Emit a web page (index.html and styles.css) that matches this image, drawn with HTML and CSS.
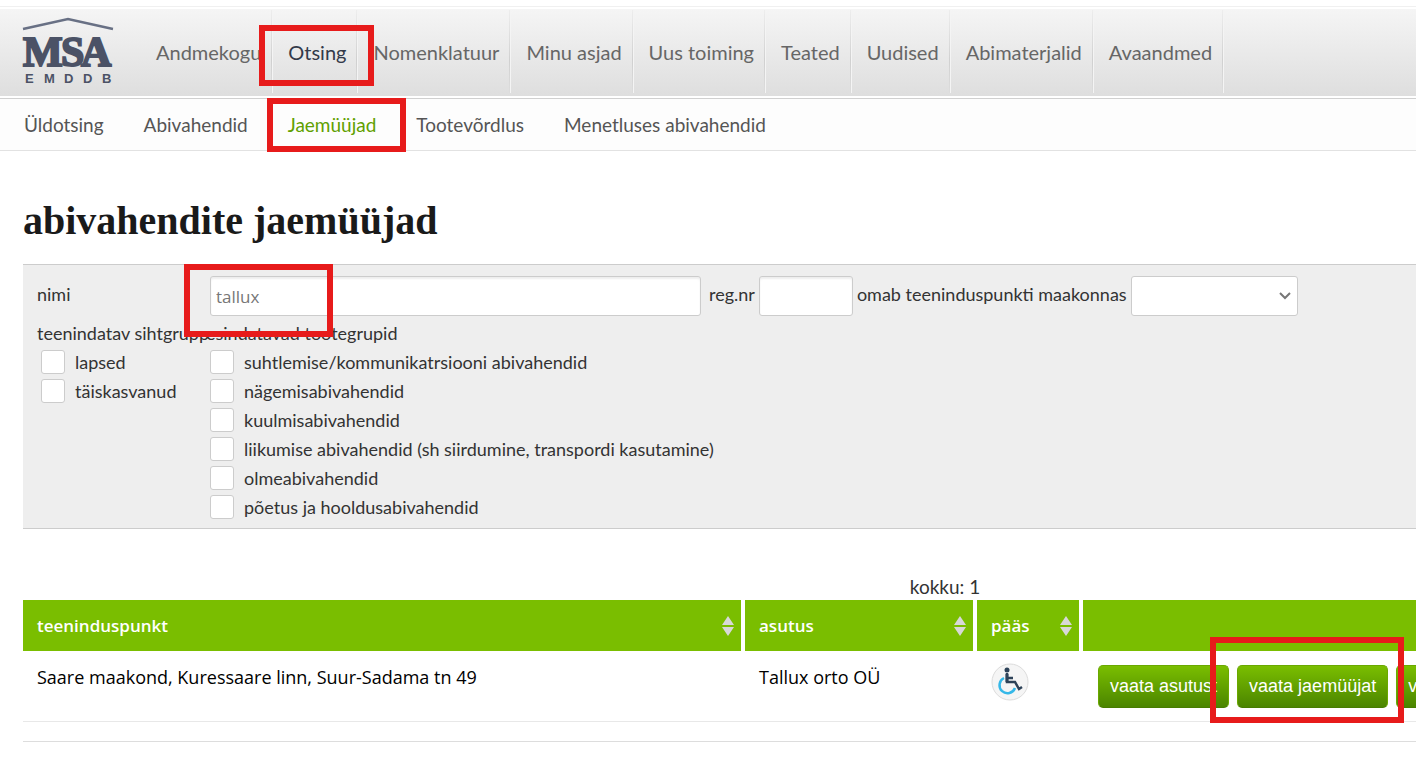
FILE: index.html
```html
<!DOCTYPE html>
<html lang="et">
<head>
  <meta charset="UTF-8" />
  <meta name="viewport" content="width=device-width, initial-scale=1.0"/>
  <title>Abivahendite jaemüüjad</title>
  <link rel="stylesheet" href="styles.css">
</head>
<body>

  <header class="header">
    <a href="#" class="logo" aria-label="MSA EMDDB">
      <svg width="92" height="68" viewBox="0 0 92 68">
        <path d="M1 12 L46 2 L91 12" fill="none" stroke="#687084" stroke-width="2.5"/>
        <text class="logo-name" x="1 39 59" y="49">MSA</text>
        <text class="logo-sub" x="3 22 42 61 80" y="66">EMDDB</text>
      </svg>
    </a>
    <nav class="main-nav">
      <a href="#">Andmekogu</a>
      <a href="#" class="active marked mark-nav">Otsing</a>
      <a href="#">Nomenklatuur</a>
      <a href="#">Minu asjad</a>
      <a href="#">Uus toiming</a>
      <a href="#">Teated</a>
      <a href="#">Uudised</a>
      <a href="#">Abimaterjalid</a>
      <a href="#">Avaandmed</a>
    </nav>
  </header>

  <nav class="sub-nav">
    <a href="#">Üldotsing</a>
    <a href="#">Abivahendid</a>
    <a href="#" class="active marked mark-sub">Jaemüüjad</a>
    <a href="#">Tootevõrdlus</a>
    <a href="#">Menetluses abivahendid</a>
  </nav>

  <main>
    <h1>abivahendite jaemüüjad</h1>

    <form class="search">
      <div class="search-row">
        <label for="name" class="first">nimi</label>
        <div class="marked mark-name">
          <input type="text" id="name" class="name" value="tallux">
        </div>
        <label for="reg" class="reg-label">reg.nr</label>
        <input type="text" id="reg" class="reg">
        <label for="county">omab teeninduspunkti maakonnas</label>
        <select id="county">
          <option></option>
        </select>
      </div>
      <div class="groups">
        <div class="group" role="group" aria-labelledby="target">
          <span class="group-title" id="target">teenindatav sihtgrupp</span>
          <label><input type="checkbox"> lapsed</label>
          <label><input type="checkbox"> täiskasvanud</label>
        </div>
        <div class="group" role="group" aria-labelledby="products">
          <span class="group-title" id="products">esindatavad tootegrupid</span>
          <label><input type="checkbox"> suhtlemise/kommunikatrsiooni abivahendid</label>
          <label><input type="checkbox"> nägemisabivahendid</label>
          <label><input type="checkbox"> kuulmisabivahendid</label>
          <label><input type="checkbox"> liikumise abivahendid (sh siirdumine, transpordi kasutamine)</label>
          <label><input type="checkbox"> olmeabivahendid</label>
          <label><input type="checkbox"> põetus ja hooldusabivahendid</label>
        </div>
      </div>
    </form>

    <section class="results">
      <p class="total">kokku: 1</p>
      <table>
        <thead>
          <tr>
            <th class="col-place"><div class="sort">teeninduspunkt <svg width="12" height="20" viewBox="0 0 12 20"><path d="M6 0L12 9H0zM0 11H12L6 20z" fill="#d8d8d8"/></svg></div></th>
            <th class="col-company"><div class="sort">asutus <svg width="12" height="20" viewBox="0 0 12 20"><path d="M6 0L12 9H0zM0 11H12L6 20z" fill="#d8d8d8"/></svg></div></th>
            <th class="col-access"><div class="sort">pääs <svg width="12" height="20" viewBox="0 0 12 20"><path d="M6 0L12 9H0zM0 11H12L6 20z" fill="#d8d8d8"/></svg></div></th>
            <th></th>
          </tr>
        </thead>
        <tbody>
          <tr>
            <td>Saare maakond, Kuressaare linn, Suur-Sadama tn 49</td>
            <td>Tallux orto OÜ</td>
            <td class="access">
              <svg width="38" height="38" viewBox="0 0 38 38">
                <circle cx="19" cy="19" r="18" fill="#f5f5f5" stroke="#dcdcdc"/>
                <path d="M13 15a8 8 0 1 0 11 10" fill="none" stroke="#35b8e8" stroke-width="2.5"/>
                <circle cx="16" cy="7" r="2.5" fill="#2d4258"/>
                <path d="M16 10v9h8l4 7l3-2M16 15h6" fill="none" stroke="#2d4258" stroke-width="2.5"/>
                <path d="M16 11v8" stroke="#2d4258" stroke-width="3"/>
              </svg>
            </td>
            <td class="actions">
              <div class="buttons">
                <button type="button">vaata asutust</button>
                <div class="marked mark-button"><button type="button">vaata jaemüüjat</button></div>
                <button type="button">vaata</button>
              </div>
            </td>
          </tr>
        </tbody>
      </table>
    </section>
  </main>

</body>
</html>
```
FILE: styles.css
```css
* {
  margin: 0;
  padding: 0;
  box-sizing: border-box;
}
body {
  font-family: Lato, sans-serif;
  font-size: 18px;
  color: #333;
  background: white;
  overflow-x: hidden;
  padding-top: 6px;
}
a {
  text-decoration: none;
}

/* header */
.header {
  display: flex;
  height: 93px;
  padding-left: 22px;
  gap: 26px;
  border-top: 1px solid #f0f0f0;
  border-bottom: 1px solid #d0d0d0;
  background: linear-gradient(#f5f5f5, #dedede) 0 2px / 100% 87px no-repeat;
}
.logo {
  padding-top: 10px;
}
.logo-name {
  font: bold 42px "Liberation Serif", serif;
  fill: #4b5266;
  stroke: #4b5266;
  stroke-width: 2px;
}
.logo-sub {
  font: bold 13px "Liberation Sans", sans-serif;
  fill: #4b5266;
}
.main-nav {
  display: flex;
  padding: 3px 0 5px;
}
.main-nav a {
  display: flex;
  align-items: center;
  padding: 0 10px 0 16px;
  font-size: 20px;
  color: #666;
  white-space: nowrap;
  border-right: 1px solid;
  border-image: linear-gradient(#eee, #d0d0d0 60%, #ddd) 1;
  box-shadow: 1px 0 0 #f4f4f4;
}
.main-nav a.active {
  color: #333a4a;
}
.sub-nav {
  display: flex;
  align-items: center;
  gap: 40px;
  height: 52px;
  padding: 0 0 1px 24px;
  font-size: 19px;
  background: #fdfdfd;
  border-bottom: 1px solid #e2e2e2;
}
.sub-nav a {
  color: #555;
}
.sub-nav a.active {
  color: #60a000;
}

/* red frames */
.marked {
  position: relative;
}
.marked::after {
  content: "";
  position: absolute;
  z-index: 2;
  box-sizing: border-box;
  border: 6px solid #e71b1b;
  pointer-events: none;
}
.mark-nav::after {
  inset: 15px -18px 7px -13px;
}
.mark-sub::after {
  inset: -15px -30px -16px -21px;
}
.mark-name::after {
  left: -26px;
  top: -12px;
  width: 149px;
  height: 73px;
}
.mark-button::after {
  inset: -28px -16px -15px -27px;
}

main {
  padding-left: 23px;
}
h1 {
  font: bold 40px/50px "Liberation Serif", serif;
  color: #1a1a1a;
  padding: 45px 0 18px;
}

/* search form */
.search {
  background: #eee;
  border-top: 1px solid #ccc;
  border-bottom: 1px solid #ccc;
  padding: 11px 14px 7px;
}
.search-row {
  display: flex;
  align-items: center;
  gap: 4px;
  white-space: nowrap;
}
.search-row label {
  padding-bottom: 4px;
}
.first {
  width: 169px;
}
.reg-label {
  margin-left: 4px;
}
input[type="text"], select {
  height: 40px;
  border: 1px solid #ccc;
  border-radius: 3px;
  background-color: white;
  padding: 0 5px;
  font: 500 17px "Open Sans", sans-serif;
  color: #777;
}
input[type="text"] {
  display: block;
  box-shadow: inset 0 2px 2px #eee;
}
.name {
  width: 491px;
}
.reg {
  width: 94px;
}
select {
  width: 167px;
  appearance: none;
  background: white url("data:image/svg+xml,%3Csvg xmlns='http://www.w3.org/2000/svg' width='12' height='8'%3E%3Cpath d='M1 1l5 5l5-5' fill='none' stroke='%23777' stroke-width='2'/%3E%3C/svg%3E") right 6px center no-repeat;
}
.groups {
  display: grid;
  grid-template-columns: 169px 1fr;
  padding-top: 6px;
}
.group {
  display: flex;
  flex-direction: column;
  align-items: flex-start;
  white-space: nowrap;
}
.group-title {
  line-height: 22px;
  margin-bottom: 3px;
}
.group label {
  display: flex;
  align-items: center;
  gap: 10px;
  height: 29px;
  padding-left: 4px;
}
input[type="checkbox"] {
  appearance: none;
  width: 24px;
  height: 24px;
  border: 1px solid #ccc;
  border-radius: 3px;
  background: white;
}

/* results, wider than the window on small screens */
.results {
  min-width: 1844px;
  border-bottom: 1px solid #ddd;
  padding: 45px 0 19px;
}
.total {
  text-align: center;
  font-size: 19px;
  line-height: 26px;
}
table {
  width: 100%;
  table-layout: fixed;
  border-collapse: separate;
  border-spacing: 0;
  font-family: "Open Sans", sans-serif;
  color: #000;
}
.col-place {
  width: 722px;
}
.col-company {
  width: 232px;
}
.col-access {
  width: 106px;
}
th {
  height: 51px;
  padding: 0 12px 0 14px;
  background: #7abe00;
  border-right: 4px solid white;
  color: white;
  font-size: 17px;
  font-weight: 600;
  text-align: left;
}
.col-place, .col-company, .col-access {
  padding-right: 7px;
}
.sort {
  display: flex;
  align-items: center;
  justify-content: space-between;
}
td {
  height: 71px;
  padding: 14px;
  line-height: 24px;
  font-weight: 500;
  vertical-align: top;
  border-bottom: 1px solid #e8e8e8;
}
td.access {
  padding-top: 12px;
}
td.actions {
  padding: 14px 15px 13px;
}
.access svg {
  display: block;
}
.buttons {
  display: flex;
  gap: 8px;
}
button {
  height: 43px;
  padding: 0 11px;
  font: 18px "Liberation Sans", sans-serif;
  color: white;
  background: linear-gradient(#7abe00, #4b8500);
  border: 1px solid #6aa800;
  border-bottom-color: #477d00;
  border-radius: 5px;
}
```
